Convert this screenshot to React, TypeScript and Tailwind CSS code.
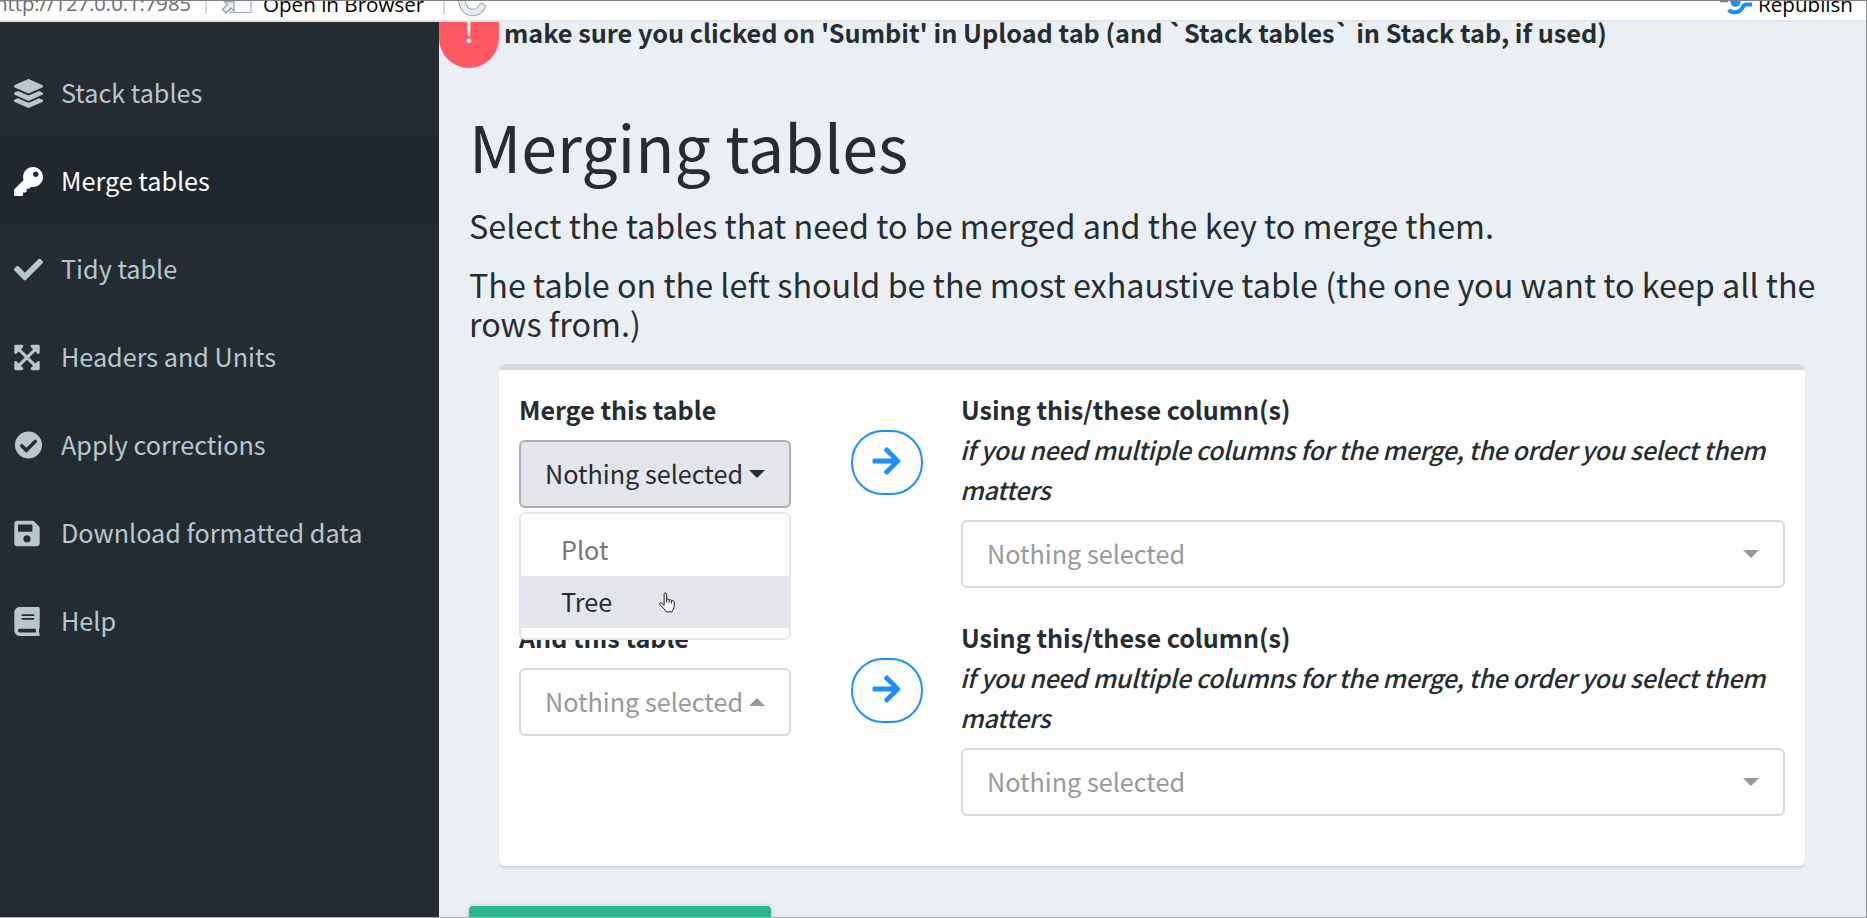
import type { ReactNode } from "react";
import type { IconType } from "react-icons";
import {
  FaLayerGroup,
  FaKey,
  FaCheck,
  FaExpandArrowsAlt,
  FaCheckCircle,
  FaSave,
  FaBook,
  FaArrowRight,
} from "react-icons/fa";

type NavItem = { label: string; icon: IconType; iconClass: string; active?: boolean };

const navItems: NavItem[] = [
  { label: "Stack tables", icon: FaLayerGroup, iconClass: "h-[29px] w-[29px]" },
  { label: "Merge tables", icon: FaKey, iconClass: "h-[29px] w-[29px]", active: true },
  { label: "Tidy table", icon: FaCheck, iconClass: "h-[29px] w-[29px]" },
  { label: "Headers and Units", icon: FaExpandArrowsAlt, iconClass: "h-[29px] w-[26px]" },
  { label: "Apply corrections", icon: FaCheckCircle, iconClass: "h-[28px] w-[29px]" },
  { label: "Download formatted data", icon: FaSave, iconClass: "h-[29px] w-[26px]" },
  { label: "Help", icon: FaBook, iconClass: "h-[29px] w-[26px]" },
];

function Toolbar() {
  return (
    <header className="flex h-[22px] shrink-0 overflow-hidden border-t border-b-2 border-t-[#7f7f81] border-b-[#e2e4e8] bg-[#fdfdfd] font-['Open_Sans',sans-serif] text-[20.6px] leading-5">
      <div className="-mt-[8px] flex w-[191px] shrink-0 justify-end text-[20.2px] whitespace-nowrap text-[#6c6c6c]">
        http://127.0.0.1:7985
      </div>
      <div className="ml-[14px] h-[13px] w-0.5 shrink-0 bg-[#d5d7da]" />
      <svg className="ml-[14px] h-[13px] w-8 shrink-0" viewBox="0 0 32 13">
        <path d="M9 -2v13.5h21V-2" fill="#f7f9fb" stroke="#a3a8b0" strokeWidth="1.2" />
        <path d="M1.5 8.5 6.5 3.6 3.5.8H13v9.4l-3-3.2-5 5z" fill="#e6ebf1" stroke="#8e97a3" strokeWidth="1.1" />
      </svg>
      <span className="-mt-[7px] ml-[10px] whitespace-nowrap text-black">Open in Browser</span>
      <div className="ml-[19px] h-[13px] w-0.5 shrink-0 bg-[#d5d7da]" />
      <svg className="ml-3 h-4 w-[30px] shrink-0" viewBox="0 0 30 16">
        <path d="M4.500 -3C5 6.500 9 11.500 15.500 11.500c4.500 0 7.500-2.200 9.500-5.800" fill="none" stroke="#9aa3ae" strokeWidth="7.500" strokeLinecap="round" />
        <path d="M4.500 -3C5 6.500 9 11.500 15.500 11.500c4.500 0 7.500-2.200 9.500-5.800" fill="none" stroke="#e6ecf2" strokeWidth="5.500" strokeLinecap="round" />
      </svg>
      <div className="ml-auto flex shrink-0 pr-[14px]">
        <svg className="h-[14px] w-[33px]" viewBox="0 0 33 14">
          <circle cx="16.500" cy="1" r="5" fill="#1e8fff" />
          <path d="M1 0h8" stroke="#1e8fff" strokeWidth="2.4" />
          <path d="M9.500 9c3.500 3.200 11 3 13.500-1.500 1.400-2.800 2-4 4-4h6" fill="none" stroke="#1e8fff" strokeWidth="4" />
        </svg>
        <span className="-mt-[7px] ml-[6px] text-black">Republish</span>
      </div>
    </header>
  );
}

function Sidebar() {
  return (
    <nav className="w-[439px] shrink-0 bg-[#252d33] pt-[27px]">
      {navItems.map(({ label, icon: Icon, iconClass, active }) => (
        <a
          key={label}
          className={
            active
              ? "flex h-[88px] items-center bg-[#20272d] pl-[14px] text-white"
              : "flex h-[88px] items-center pl-[14px] text-[#b8c7ce]"
          }
        >
          <span className="flex w-[47px] shrink-0">
            <Icon className={iconClass} />
          </span>
          <span className="pb-[3px] text-[25.2px] leading-[40px]">{label}</span>
        </a>
      ))}
    </nav>
  );
}

function Caret({ up }: { up?: boolean }) {
  return (
    <svg className="h-2 w-4 shrink-0" viewBox="0 0 16 8">
      <path d={up ? "M0 8 8 0l8 8z" : "M0 0h16L8 8z"} fill="currentColor" />
    </svg>
  );
}

function Picker({ open, up }: { open?: boolean; up?: boolean }) {
  return (
    <button
      className={
        open
          ? "flex h-[68px] w-full items-center justify-between rounded-md border-2 border-[#acadb0] bg-[#e4e5ea] pr-6 pl-6 text-[#252d30]"
          : "flex h-[68px] w-full items-center justify-between rounded-md border-2 border-[#d9dade] bg-[#fdfdfd] pr-6 pl-6 text-[#999999]"
      }
    >
      <span className="pb-0.5 text-[25.2px] leading-[40px]">Nothing selected</span>
      <Caret up={up} />
    </button>
  );
}

function OptionMenu() {
  return (
    <div className="absolute top-[123px] left-0 z-10 h-[128px] w-full rounded-md border-2 border-[#e4e5ea] bg-[#fdfdfd] py-2.5 text-[25.2px]">
      <div className="h-[52px] pl-10 leading-[50px] text-[#777777]">Plot</div>
      <div className="h-[52px] bg-[#e4e5ea] pl-10 leading-[50px] text-[#252d30]">Tree</div>
      <svg className="absolute top-[78px] left-[137px] h-[22px] w-[18px]" viewBox="0 0 18 23">
        <path
          d="M6 14V2.2C6 .6 8.600.6 8.600 2.200V8c.8-1 2.400-.6 2.600.5.9-.8 2.300-.4 2.500.7 1-.6 2.800-.2 2.800 1.400V15c0 2-1.500 3.600-2.400 5.800H8.400C7 18.400 3.500 15.500 1.300 12.600 .8 11.200 2.300 10.700 3.400 11.600z"
          fill="#ffffff"
          stroke="#111122"
          strokeWidth="1"
        />
        <path d="M8.600 8v3M11.200 8.500V11.500M13.700 9.300V12" stroke="#111122" strokeWidth="1" />
      </svg>
    </div>
  );
}

function MergeRow({ title, up, children, open }: { title: string; up?: boolean; open?: boolean; children?: ReactNode }) {
  return (
    <div className="flex h-[199px] items-start">
      <div className="relative w-[272px] shrink-0">
        <h3 className="mb-[11px] text-[25.1px] leading-[40px] font-bold">{title}</h3>
        <Picker open={open} up={up} />
        {children}
      </div>
      <div className="mt-[41px] ml-[60px] flex h-[65px] w-[72px] shrink-0 items-center justify-center rounded-[32px] border-2 border-[#1e8fff] pr-0.5 pb-[3px] text-[#1e8fff]">
        <FaArrowRight className="h-[32px] w-[29px]" />
      </div>
      <div className="ml-[38px] flex-1">
        <h3 className="text-[25.1px] leading-[40px] font-bold">Using this/these column(s)</h3>
        <p className="mb-[11px] -ml-px text-[25px] leading-[40px] font-medium tracking-[-0.36px] italic">
          if you need multiple columns for the merge, the order you select them
          <br />
          matters
        </p>
        <Picker />
      </div>
    </div>
  );
}

export default function App() {
  return (
    <div className="relative flex h-[918px] w-[1867px] flex-col overflow-hidden bg-[#eaeff4] font-['Noto_Sans_CJK_SC',sans-serif] text-[#252d30]">
      <Toolbar />
      <div className="flex min-h-0 flex-1 overflow-hidden">
        <Sidebar />
        <main className="min-w-0 flex-1 overflow-hidden">
          <div className="-mt-[14px] flex items-start">
            <div className="flex h-[60px] w-[60px] shrink-0 justify-center rounded-b-[30px] bg-[#ff5964] font-['Open_Sans',sans-serif] text-[34px] leading-[44px] text-white">
              !
            </div>
            <p className="mt-1 ml-[5px] text-[25.25px] leading-[40px] font-bold whitespace-nowrap">
              make sure you clicked on 'Sumbit' in Upload tab (and `Stack tables` in Stack tab, if used)
            </p>
          </div>
          <div className="pl-[30px]">
            <h1 className="mt-[37px] text-[64.4px] leading-[80px]">Merging tables</h1>
            <p className="mt-[21px] text-[32.3px] leading-[39.6px]">
              Select the tables that need to be merged and the key to merge them.
            </p>
            <p className="mt-[19px] text-[32.3px] leading-[39.6px] whitespace-nowrap">
              The table on the left should be the most exhaustive table (the one you want to keep all the
              <br />
              rows from.)
            </p>
            <section className="mt-5 ml-[30px] flex h-[502px] w-[1306px] flex-col gap-[29px] rounded-md border-t-[6px] border-[#d8d9de] bg-[#fdfdfd] px-5 pt-[19px] shadow-[0_2px_2px_rgba(0,0,0,0.1)]">
              <MergeRow title="Merge this table" open>
                <OptionMenu />
              </MergeRow>
              <MergeRow title="And this table" up />
            </section>
            <div className="mt-10 h-20 w-[302px] rounded bg-[#2ab58b] shadow-[0_2px_10px_rgba(0,0,0,0.16)]" />
          </div>
        </main>
      </div>
      <div className="pointer-events-none absolute inset-0 border-r border-b border-r-[#8f9194] border-b-[#a9abae]" />
    </div>
  );
}
